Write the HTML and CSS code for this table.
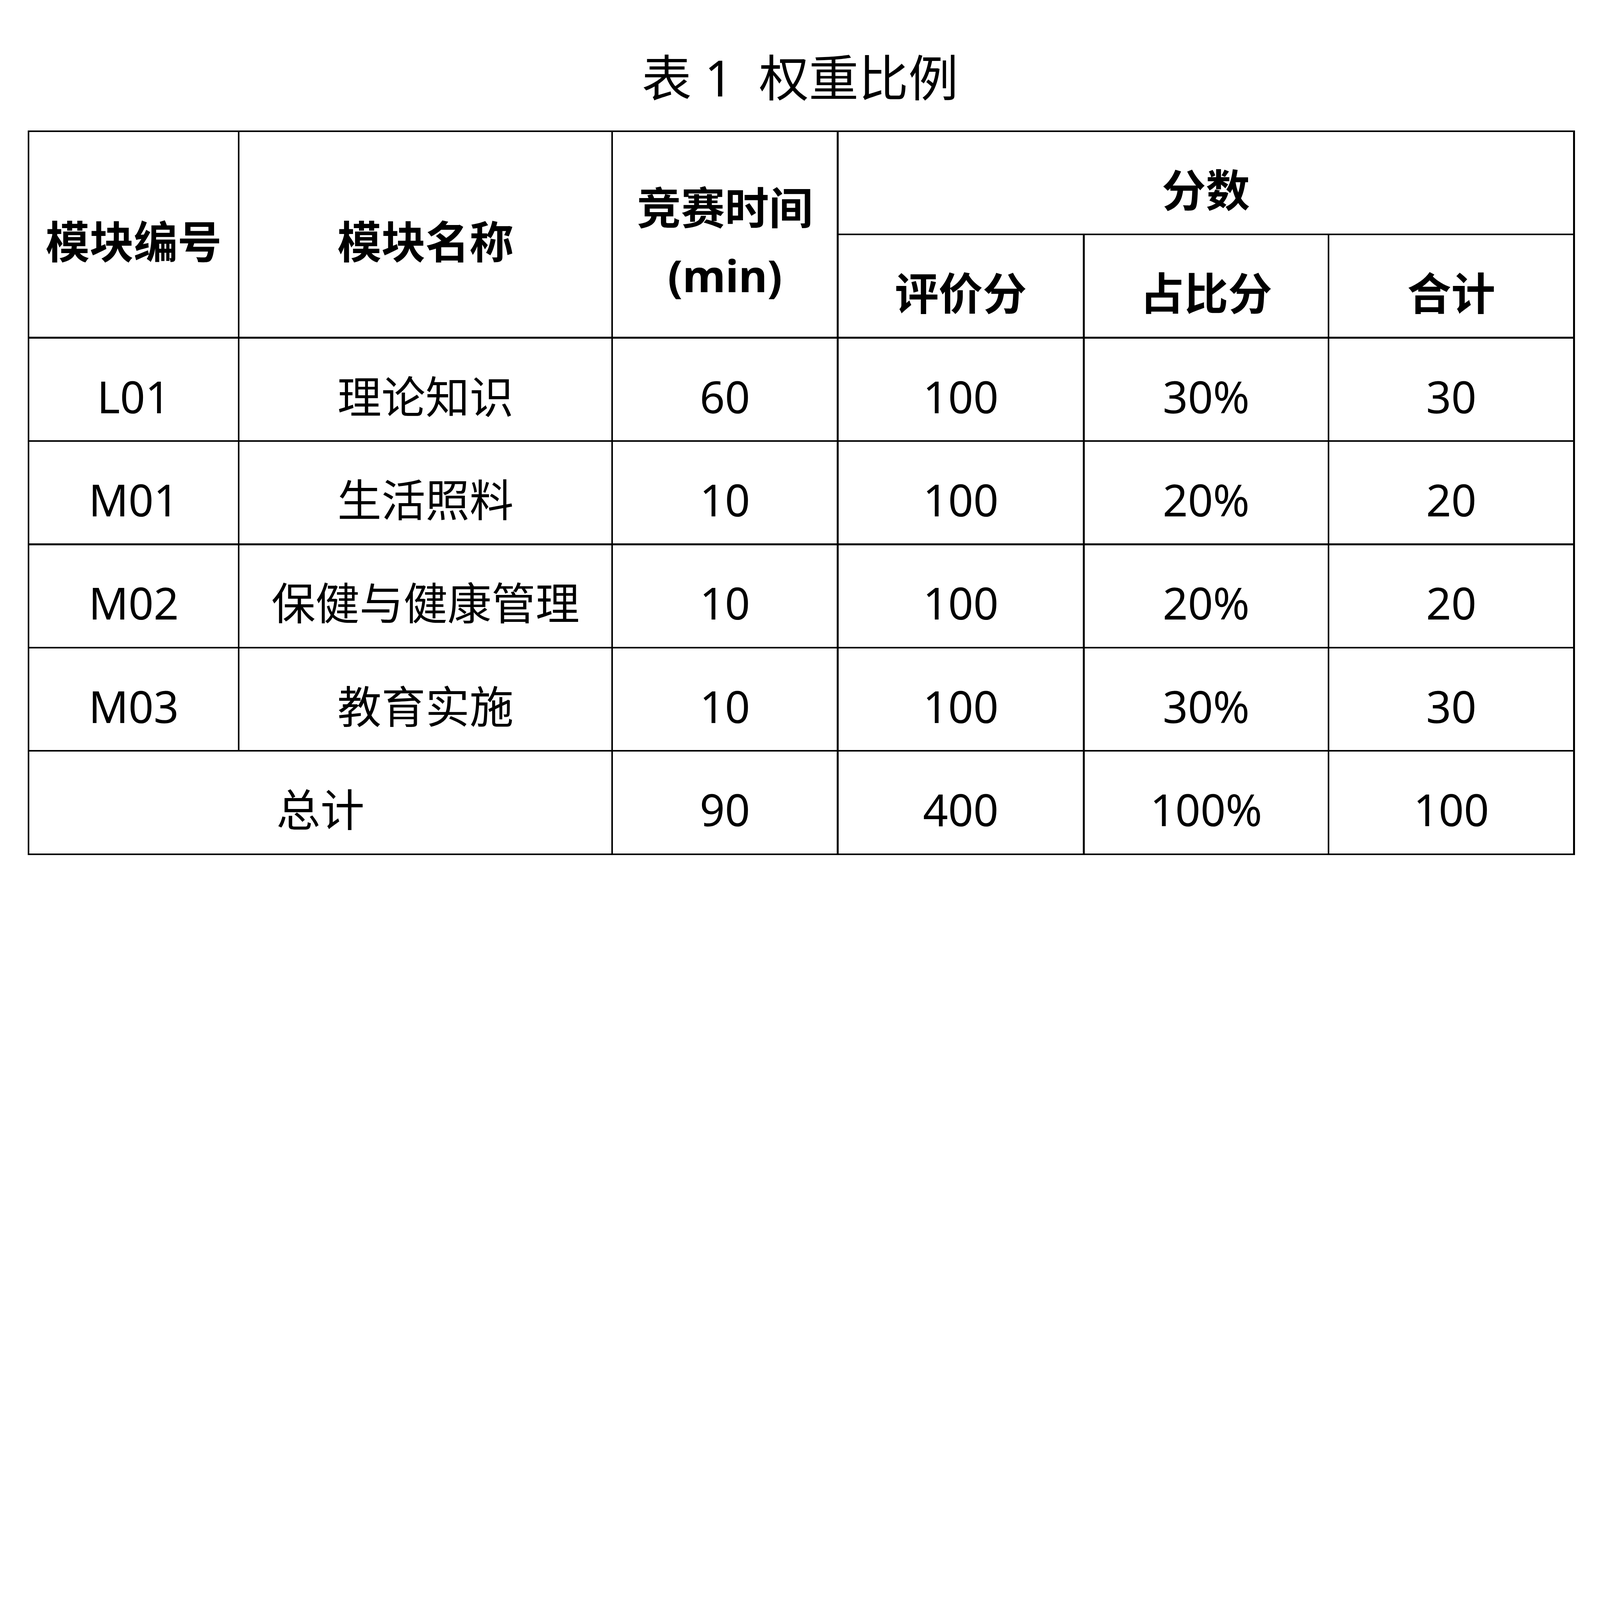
FILE: index.html
```html
<!DOCTYPE html>
<html lang="zh-CN">
<head>
<meta charset="utf-8">
<title>表1 权重比例</title>
<link rel="stylesheet" href="styles.css">
</head>
<body>
<div class="page">
  <h1 class="caption">表 1  权重比例</h1>
  <div class="grid">
    <div class="cell head r-span2">模块编号</div>
    <div class="cell head r-span2">模块名称</div>
    <div class="cell head r-span2">竞赛时间<br>(min)</div>
    <div class="cell head c-span3">分数</div>
    <div class="cell head">评价分</div>
    <div class="cell head">占比分</div>
    <div class="cell head">合计</div>

    <div class="cell">L01</div>
    <div class="cell">理论知识</div>
    <div class="cell">60</div>
    <div class="cell">100</div>
    <div class="cell">30%</div>
    <div class="cell">30</div>

    <div class="cell">M01</div>
    <div class="cell">生活照料</div>
    <div class="cell">10</div>
    <div class="cell">100</div>
    <div class="cell">20%</div>
    <div class="cell">20</div>

    <div class="cell">M02</div>
    <div class="cell">保健与健康管理</div>
    <div class="cell">10</div>
    <div class="cell">100</div>
    <div class="cell">20%</div>
    <div class="cell">20</div>

    <div class="cell">M03</div>
    <div class="cell">教育实施</div>
    <div class="cell">10</div>
    <div class="cell">100</div>
    <div class="cell">30%</div>
    <div class="cell">30</div>

    <div class="cell c-span2">总计</div>
    <div class="cell">90</div>
    <div class="cell">400</div>
    <div class="cell">100%</div>
    <div class="cell">100</div>
  </div>
</div>
</body>
</html>
```

FILE: styles.css
```css
:root {
  --u: calc(100vw / 7451);
}

html, body {
  margin: 0;
  padding: 0;
  background: #ffffff;
  overflow: hidden;
}

body {
  font-family: "Noto Sans", "Noto Sans CJK SC", sans-serif;
  color: #000000;
}

.page {
  width: 100vw;
  padding-top: calc(211 * var(--u));
  box-sizing: border-box;
}

.caption {
  margin: 0 0 calc(96 * var(--u)) 0;
  height: calc(300 * var(--u));
  line-height: calc(300 * var(--u));
  font-size: calc(232 * var(--u));
  font-weight: 400;
  text-align: center;
  white-space: pre;
}

.grid {
  margin-left: calc(129 * var(--u));
  width: calc(7205 * var(--u));
  box-sizing: border-box;
  padding: calc(8 * var(--u));
  gap: calc(8 * var(--u));
  background: #000000;
  display: grid;
  grid-template-columns:
    calc(971 * var(--u))
    calc(1731 * var(--u))
    calc(1042 * var(--u))
    calc(1138 * var(--u))
    calc(1132 * var(--u))
    calc(1135 * var(--u));
  grid-template-rows: repeat(7, calc(473 * var(--u)));
}

.cell {
  background: #ffffff;
  display: flex;
  align-items: center;
  justify-content: center;
  text-align: center;
  font-size: calc(205 * var(--u));
  line-height: calc(318 * var(--u));
  padding-top: calc(66 * var(--u));
  box-sizing: border-box;
  white-space: nowrap;
}

.head {
  font-weight: 700;
}

.r-span2 {
  grid-row: span 2;
}

.c-span3 {
  grid-column: span 3;
}

.c-span2 {
  grid-column: span 2;
}
```
